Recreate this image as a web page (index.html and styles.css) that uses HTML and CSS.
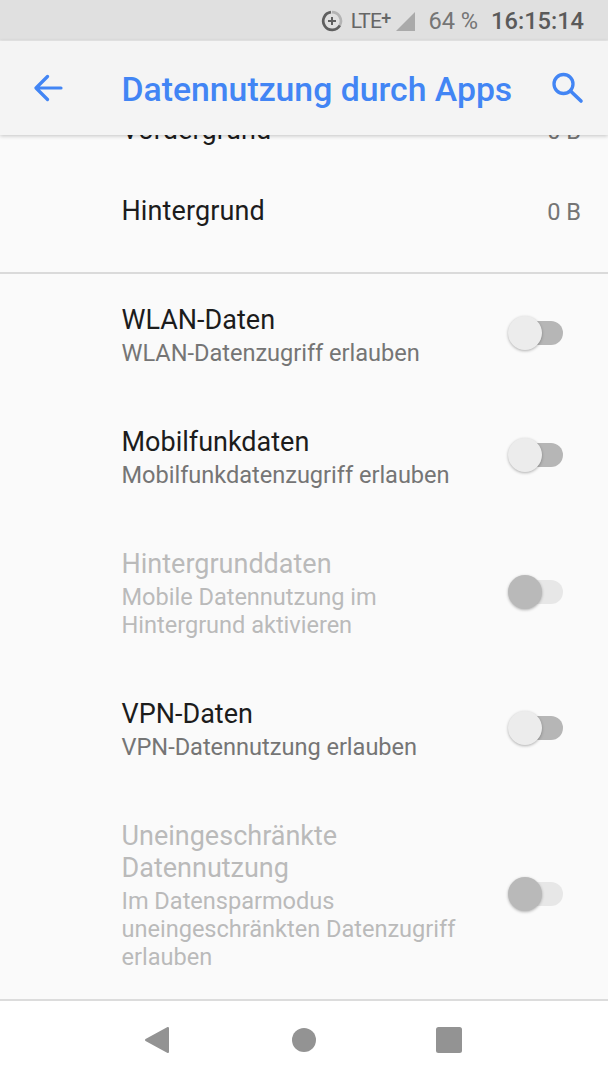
FILE: index.html
```html
<!doctype html>
<html lang="de">
<head>
    <meta charset="UTF-8">
    <meta name="viewport" content="width=device-width, initial-scale=1.0">
    <title>Datennutzung durch Apps</title>
    <link rel="stylesheet" href="styles.css">
</head>
<body>
    <div class="status-bar">
        <svg class="saver-icon" width="22" height="22" viewBox="0 0 22 22" fill="none">
            <path d="M11 2.2A8.9 8.9 0 0 1 18.9 15.2" stroke="#b4b4b4" stroke-width="2.7"/>
            <path d="M10 2.2A8.9 8.9 0 1 0 18.9 15.4" stroke="#5f5f5f" stroke-width="2.7"/>
            <path d="M11 7v8M7 11h8" stroke="#5f5f5f" stroke-width="2"/>
        </svg>
        <span class="network">LTE<span class="plus">+</span></span>
        <svg class="signal-icon" width="19" height="19" viewBox="0 0 19 19">
            <path d="M19 0v19H0z" fill="#aaaaaa"/>
        </svg>
        <span class="battery">64 %</span>
        <span class="clock">16:15:14</span>
    </div>

    <header class="app-bar">
        <svg class="back-icon" width="30" height="28" viewBox="0 0 30 28" fill="none" stroke="#4285f4" stroke-width="3.2" stroke-linecap="round" stroke-linejoin="round">
            <path d="M13.500 2.500L2 14l11.500 11.500M2.500 14h24.500"/>
        </svg>
        <h1 class="title">Datennutzung durch Apps</h1>
        <svg class="search-icon" width="32" height="32" viewBox="0 0 32 32" fill="none" stroke="#4285f4" stroke-width="3.300">
            <circle cx="11.500" cy="12" r="9.500"/>
            <path d="M18.500 19l10.500 10" stroke-linecap="round" stroke-width="3.600"/>
        </svg>
    </header>

    <main class="content">
        <div class="usage-row">
            <span class="label">Vordergrund</span>
            <span class="amount">0 B</span>
        </div>
        <div class="usage-row last">
            <span class="label">Hintergrund</span>
            <span class="amount">0 B</span>
        </div>

        <div class="row first">
            <div class="text">
                <div class="label">WLAN-Daten</div>
                <div class="summary">WLAN-Datenzugriff erlauben</div>
            </div>
            <div class="switch"></div>
        </div>
        <div class="row">
            <div class="text">
                <div class="label">Mobilfunkdaten</div>
                <div class="summary">Mobilfunkdatenzugriff erlauben</div>
            </div>
            <div class="switch"></div>
        </div>
        <div class="row disabled">
            <div class="text">
                <div class="label">Hintergrunddaten</div>
                <div class="summary">Mobile Datennutzung im<br>Hintergrund aktivieren</div>
            </div>
            <div class="switch"></div>
        </div>
        <div class="row">
            <div class="text">
                <div class="label">VPN-Daten</div>
                <div class="summary">VPN-Datennutzung erlauben</div>
            </div>
            <div class="switch"></div>
        </div>
        <div class="row disabled">
            <div class="text">
                <div class="label">Uneingeschränkte<br>Datennutzung</div>
                <div class="summary">Im Datensparmodus<br>uneingeschränkten Datenzugriff<br>erlauben</div>
            </div>
            <div class="switch"></div>
        </div>
    </main>

    <nav class="nav-bar">
        <svg width="26" height="28" viewBox="0 0 26 28" fill="#939393" stroke="#939393" stroke-width="2" stroke-linejoin="round">
            <path d="M24 2v24L2 14z"/>
        </svg>
        <svg class="home-icon" width="24" height="24" viewBox="0 0 24 24" fill="#939393">
            <circle cx="12" cy="12" r="12"/>
        </svg>
        <svg width="26" height="26" viewBox="0 0 26 26" fill="#939393">
            <rect width="26" height="26" rx="2.500"/>
        </svg>
    </nav>
</body>
</html>
```
FILE: styles.css
```css
* {
    box-sizing: border-box;
}

body {
    margin: 0;
    height: 1080px;
    display: flex;
    flex-direction: column;
    overflow: hidden;
    background: #fafafa;
    color: #1c1c1c;
    font-family: Roboto, sans-serif;
}

.status-bar {
    flex: none;
    height: 41px;
    padding: 2px 24px 0 0;
    display: flex;
    align-items: center;
    justify-content: flex-end;
    background: #e0e0e0;
    border-bottom: 1px solid #ebebeb;
    color: #5a5a5a;
    white-space: nowrap;
}

.saver-icon {
    margin-top: -1px;
}

.network {
    margin-left: 8px;
    font-size: 21px;
    letter-spacing: -0.8px;
    color: #666666;
}

.plus {
    position: relative;
    top: -4px;
    font-size: 18px;
    font-weight: 500;
}

.signal-icon {
    margin-left: 6px;
}

.battery {
    margin-left: 13px;
    font-size: 23.6px;
    color: #757575;
}

.clock {
    margin-left: 13px;
    font-size: 23.6px;
    font-weight: 500;
}

.app-bar {
    flex: none;
    height: 94px;
    padding: 0 24px 0 34px;
    display: flex;
    align-items: center;
    position: relative;
    z-index: 1;
    background: #f4f4f4;
    box-shadow: 0 1px 4px rgba(0, 0, 0, 0.22);
}

.back-icon {
    margin-right: 57.5px;
}

.title {
    flex: 1;
    margin: 3px 0 0;
    font-size: 33.75px;
    font-weight: 500;
    line-height: 40px;
    white-space: nowrap;
    color: #4285f4;
}

.content {
    flex: 1;
    min-height: 0;
    display: flex;
    flex-direction: column;
    justify-content: flex-end;
    overflow: hidden;
}

.usage-row {
    flex: none;
    height: 81px;
    padding: 0 27px 0 121.5px;
    display: flex;
    justify-content: space-between;
    align-items: flex-start;
}

.usage-row.last {
    height: 79px;
    border-bottom: 2px solid #dadada;
}

.usage-row .label {
    line-height: 33px;
    letter-spacing: 0.1px;
}

.label {
    font-size: 27px;
    line-height: 32px;
}

.amount {
    font-size: 23.6px;
    line-height: 34px;
    color: #757575;
}

.row {
    flex: none;
    padding: 31px 45.5px 27px 121.5px;
    display: flex;
    align-items: center;
    justify-content: space-between;
}

.row.first {
    padding-top: 30px;
}

.text {
    white-space: nowrap;
}

.summary {
    margin-top: 4.2px;
    font-size: 23.6px;
    line-height: 27.9px;
    letter-spacing: -0.03px;
    color: #757575;
}

.switch {
    width: 55px;
    height: 34px;
    margin-top: -5px;
    display: flex;
    align-items: center;
    position: relative;
}

.switch::before {
    content: "";
    width: 47px;
    height: 24px;
    margin-left: 8px;
    border-radius: 12px;
    background: #b6b6b6;
}

/* thumb lies over the track */
.switch::after {
    content: "";
    position: absolute;
    left: 0;
    top: 0;
    width: 34px;
    height: 34px;
    border-radius: 50%;
    background: #ececec;
    box-shadow: 0 1px 3px rgba(0, 0, 0, 0.3);
}

.disabled .label,
.disabled .summary {
    color: #bababa;
}

.disabled .switch::before {
    background: #e7e7e7;
}

.disabled .switch::after {
    background: #b9b9b9;
}

.nav-bar {
    flex: none;
    height: 81px;
    padding: 0 146px 2px 144px;
    display: flex;
    align-items: center;
    justify-content: space-between;
    background: #ffffff;
    border-top: 2px solid #dcdcdc;
}

.home-icon {
    margin-left: 2px;
}
```
